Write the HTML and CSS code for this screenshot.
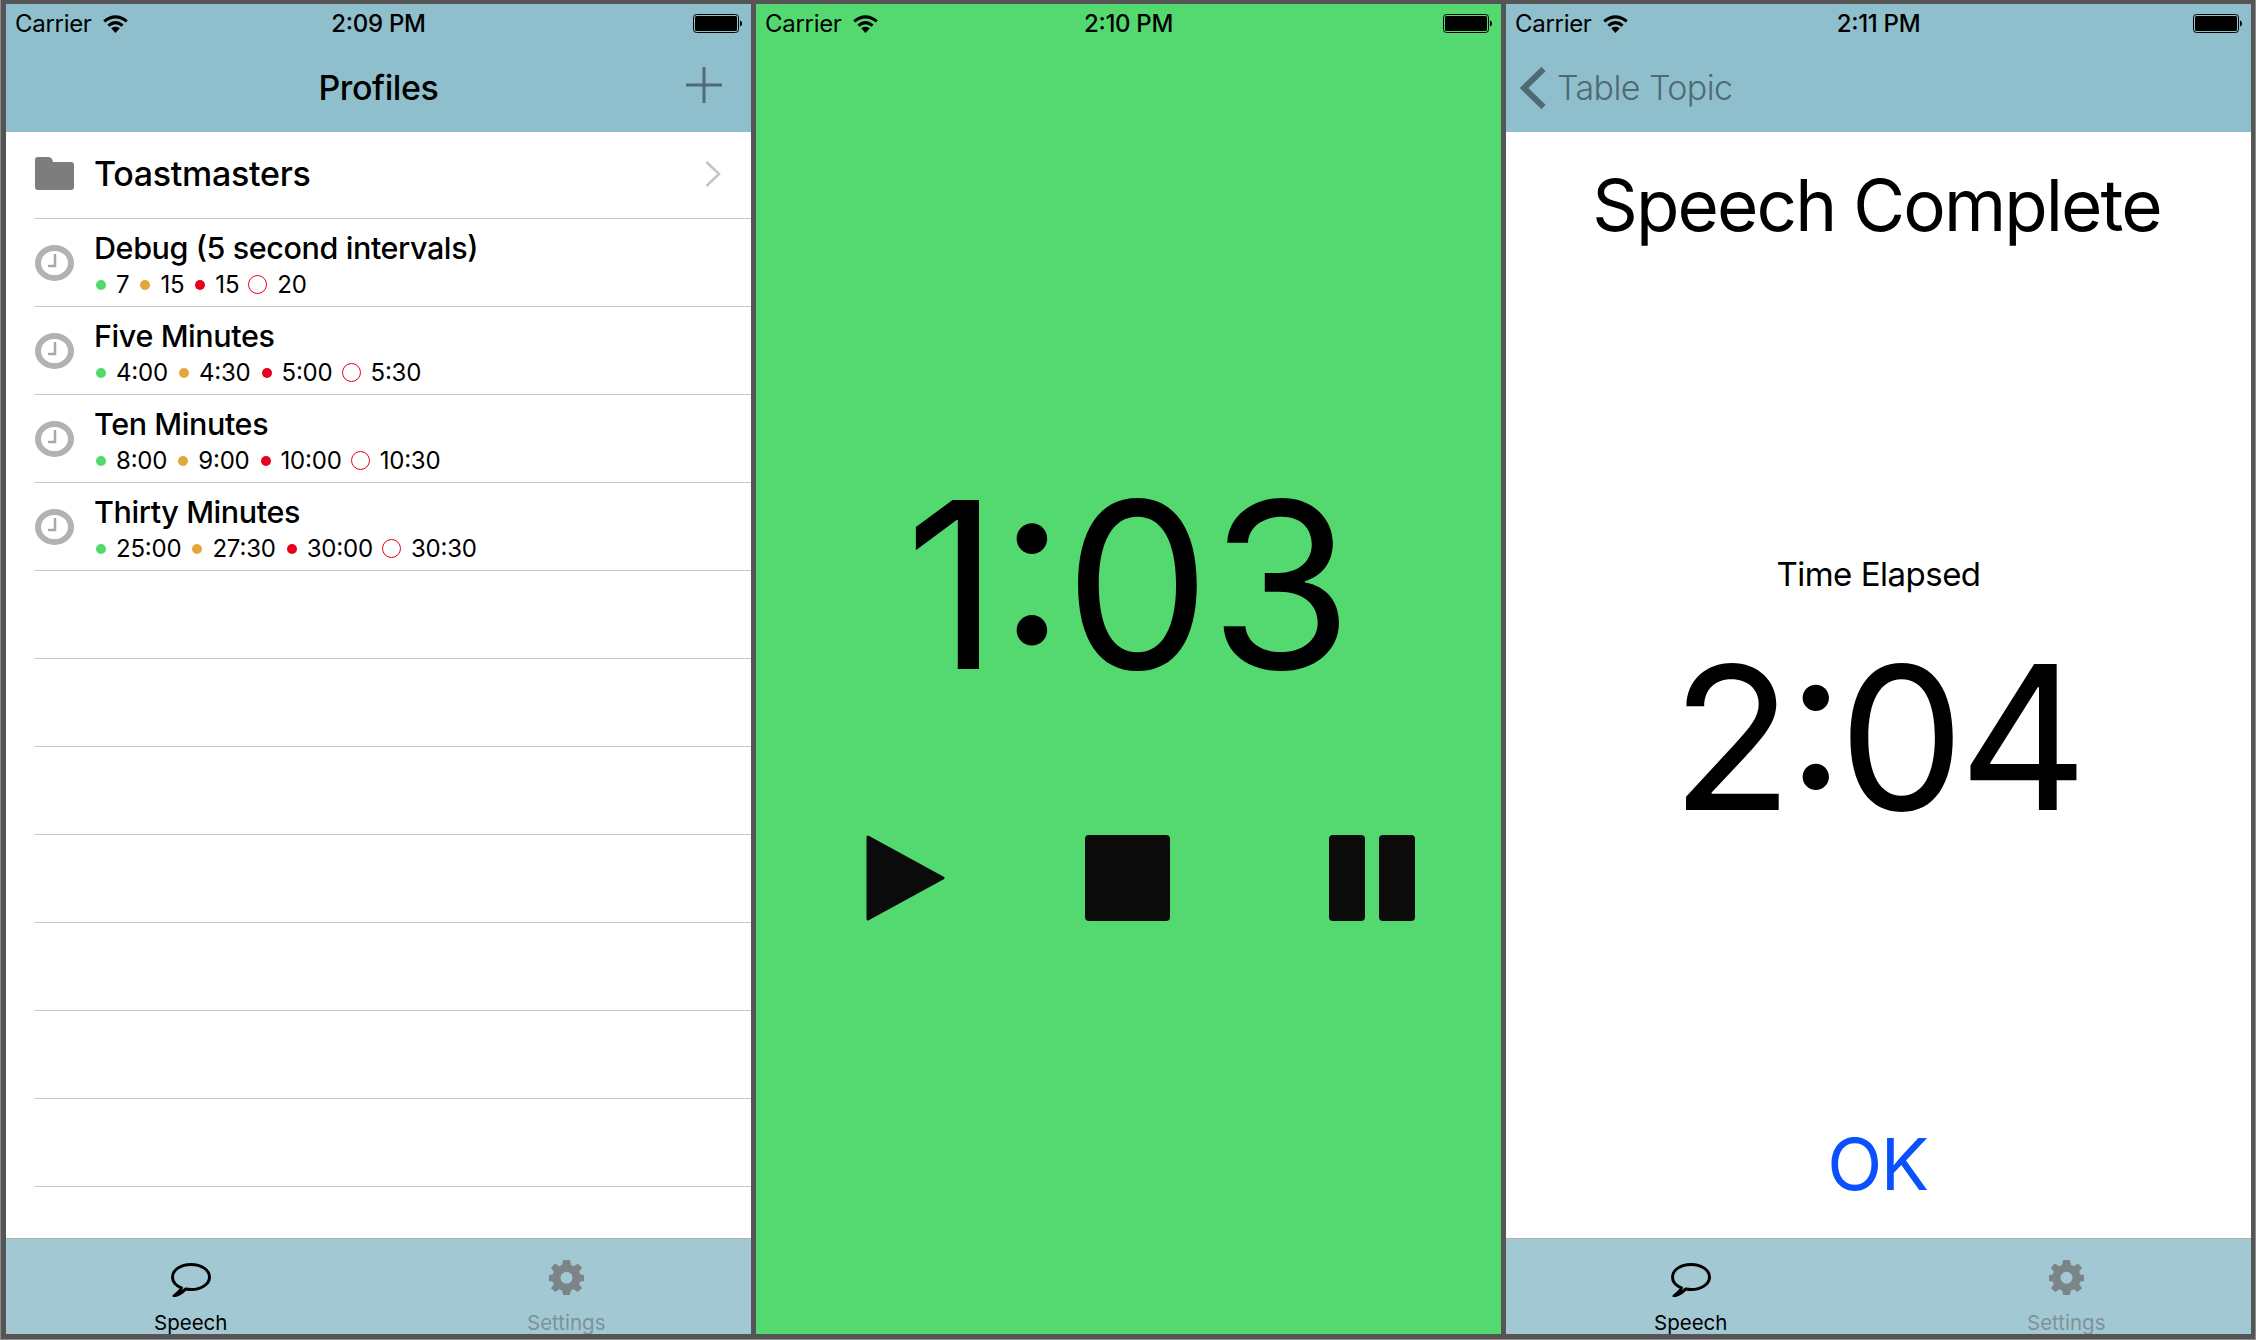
FILE: index.html
```html
<!DOCTYPE html>
<html lang="en">

<head>
    <meta charset="UTF-8" />
    <meta name="viewport" content="width=device-width, initial-scale=1.0" />
    <title>Speech Timer</title>
    <link rel="stylesheet" href="styles.css">
</head>

<body>

    <!-- shared icons -->
    <svg class="sprite" aria-hidden="true">
        <symbol id="wifi" viewBox="0 0 25 18">
            <path d="M1.2 6.4 Q12.5 -2.6 23.8 6.4" fill="none" stroke="currentColor" stroke-width="3" />
            <path d="M5.4 10.7 Q12.5 4.6 19.6 10.7" fill="none" stroke="currentColor" stroke-width="3" />
            <path d="M8.2 13.2 Q12.5 10.4 16.8 13.2 L12.5 18 Z" fill="currentColor" />
        </symbol>
        <symbol id="battery" viewBox="0 0 49 19">
            <rect x="0.5" y="0.5" width="45" height="18" rx="3" fill="none" stroke="currentColor" />
            <rect x="2" y="2" width="42" height="15" rx="1.5" fill="currentColor" />
            <path d="M47 6.5 C48.5 7 49 8 49 9.5 C49 11 48.5 12 47 12.5 Z" fill="currentColor" />
        </symbol>
        <symbol id="clock" viewBox="0 0 39 36">
            <ellipse cx="19.5" cy="18" rx="16.5" ry="15" fill="none" stroke="#b2b2b2" stroke-width="6" />
            <path d="M20 9 V21 H13" fill="none" stroke="#a8a8a8" stroke-width="2.5" />
        </symbol>
        <symbol id="speech" viewBox="0 0 40 34">
            <path d="M10.5 24.8 C4.5 22.5 1.5 18.7 1.5 14 C1.5 7 9.5 1.5 20 1.5 C30.5 1.5 38.5 7 38.5 14 C38.5 21 30.5 26.5 20 26.5 C18 26.5 16.5 26.3 14.5 26 C12 29 8.5 31.5 3 33 C7 30 9.5 28 10.5 24.8 Z" fill="none" stroke="currentColor" stroke-width="3" stroke-linejoin="round" />
        </symbol>
        <symbol id="gear" viewBox="0 0 36 36">
            <path fill-rule="evenodd" fill="currentColor" d="M14.5 0 H21.5 L22.5 5 L25.5 6.3 L29.8 3.5 L34 8 L31 12 L32.2 15 L36 15.5 V21.5 L32.2 22.2 L31 25 L34 29 L29.5 33 L25.5 30.2 L22.5 31.3 L21.5 36 H14.5 L13.5 31.3 L10.5 30.2 L6.5 33 L2 29 L5 25 L3.8 22.2 L0 21.5 V15.5 L3.8 15 L5 12 L2 8 L6.2 3.5 L10.5 6.3 L13.5 5 Z M18 12 A6.2 6.2 0 1 0 18 24.4 A6.2 6.2 0 1 0 18 12 Z" />
        </symbol>
    </svg>

    <div class="frame">

        <!-- profiles list -->
        <section class="screen">
            <header class="top tinted">
                <div class="status">
                    <span class="carrier">Carrier<svg class="wifi"><use href="#wifi" /></svg></span>
                    <span class="clock-time">2:09 PM</span>
                    <svg class="battery"><use href="#battery" /></svg>
                </div>
                <div class="nav">
                    <h1 class="nav-title">Profiles</h1>
                    <svg class="plus" viewBox="0 0 36 36">
                        <path d="M18 0 V36 M0 18 H36" stroke="#4f6a73" stroke-width="3" fill="none" />
                    </svg>
                </div>
            </header>

            <ul class="list">
                <li class="row folder-row">
                    <svg class="row-icon" viewBox="0 0 39 33">
                        <path d="M3 0 H13 Q17 0 18 5 H36 Q39 5 39 8 V30 Q39 33 36 33 H3 Q0 33 0 30 V3 Q0 0 3 0 Z" fill="#7d7d7d" />
                    </svg>
                    <span class="folder-name">Toastmasters</span>
                    <svg class="chevron" viewBox="0 0 16 26">
                        <path d="M1.5 1 L14 13 L1.5 25" fill="none" stroke="#c4c4c4" stroke-width="2.5" />
                    </svg>
                </li>
                <li class="row">
                    <svg class="row-icon clock-icon"><use href="#clock" /></svg>
                    <div class="profile">
                        <div class="profile-name">Debug (5 second intervals)</div>
                        <div class="times">
                            <i class="dot green"></i><span>7</span>
                            <i class="dot orange"></i><span>15</span>
                            <i class="dot red"></i><span>15</span>
                            <i class="ring"></i><span>20</span>
                        </div>
                    </div>
                </li>
                <li class="row">
                    <svg class="row-icon clock-icon"><use href="#clock" /></svg>
                    <div class="profile">
                        <div class="profile-name">Five Minutes</div>
                        <div class="times">
                            <i class="dot green"></i><span>4:00</span>
                            <i class="dot orange"></i><span>4:30</span>
                            <i class="dot red"></i><span>5:00</span>
                            <i class="ring"></i><span>5:30</span>
                        </div>
                    </div>
                </li>
                <li class="row">
                    <svg class="row-icon clock-icon"><use href="#clock" /></svg>
                    <div class="profile">
                        <div class="profile-name">Ten Minutes</div>
                        <div class="times">
                            <i class="dot green"></i><span>8:00</span>
                            <i class="dot orange"></i><span>9:00</span>
                            <i class="dot red"></i><span>10:00</span>
                            <i class="ring"></i><span>10:30</span>
                        </div>
                    </div>
                </li>
                <li class="row">
                    <svg class="row-icon clock-icon"><use href="#clock" /></svg>
                    <div class="profile">
                        <div class="profile-name">Thirty Minutes</div>
                        <div class="times">
                            <i class="dot green"></i><span>25:00</span>
                            <i class="dot orange"></i><span>27:30</span>
                            <i class="dot red"></i><span>30:00</span>
                            <i class="ring"></i><span>30:30</span>
                        </div>
                    </div>
                </li>
                <li class="row"></li>
                <li class="row"></li>
                <li class="row"></li>
                <li class="row"></li>
                <li class="row"></li>
                <li class="row"></li>
                <li class="row"></li>
            </ul>

            <nav class="tabs">
                <div class="tab active">
                    <svg class="tab-speech"><use href="#speech" /></svg>
                    <span>Speech</span>
                </div>
                <div class="tab">
                    <svg class="tab-gear"><use href="#gear" /></svg>
                    <span>Settings</span>
                </div>
            </nav>
        </section>

        <!-- running timer -->
        <section class="screen timer-screen">
            <header class="top">
                <div class="status">
                    <span class="carrier">Carrier<svg class="wifi"><use href="#wifi" /></svg></span>
                    <span class="clock-time">2:10 PM</span>
                    <svg class="battery"><use href="#battery" /></svg>
                </div>
            </header>
            <div class="timer">1:03</div>
            <div class="controls">
                <svg class="play" viewBox="0 0 79 86">
                    <path d="M2 2 L77 43 L2 84 Z" fill="#0b0b0b" stroke="#0b0b0b" stroke-width="3" stroke-linejoin="round" />
                </svg>
                <div class="stop"></div>
                <div class="pause"><i></i><i></i></div>
            </div>
        </section>

        <!-- finished -->
        <section class="screen">
            <header class="top tinted">
                <div class="status">
                    <span class="carrier">Carrier<svg class="wifi"><use href="#wifi" /></svg></span>
                    <span class="clock-time">2:11 PM</span>
                    <svg class="battery"><use href="#battery" /></svg>
                </div>
                <div class="nav back-nav">
                    <svg class="back-arrow" viewBox="0 0 26 42">
                        <path d="M23.5 2 L4 21 L23.5 40" fill="none" stroke="#4f6a73" stroke-width="6" />
                    </svg>
                    <span class="back-label">Table Topic</span>
                </div>
            </header>

            <main class="complete">
                <h2 class="complete-title">Speech Complete</h2>
                <div class="elapsed-label">Time Elapsed</div>
                <div class="elapsed">2:04</div>
                <div class="ok">OK</div>
            </main>

            <nav class="tabs">
                <div class="tab active">
                    <svg class="tab-speech"><use href="#speech" /></svg>
                    <span>Speech</span>
                </div>
                <div class="tab">
                    <svg class="tab-gear"><use href="#gear" /></svg>
                    <span>Settings</span>
                </div>
            </nav>
        </section>

    </div>

</body>

</html>
```

FILE: styles.css
```css
html {
    background-color: #8c8c8c;
}

body {
    margin: 0;
    padding: 0 1px 1px 1px;
    font-family: Inter, "Liberation Sans", sans-serif;
    font-feature-settings: "case";
    color: #000;
}

.sprite {
    display: block;
    width: 0;
    height: 0;
    overflow: hidden;
}

.frame {
    display: grid;
    grid-template-columns: repeat(3, 745px);
    gap: 5px;
    height: 1339px;
    box-sizing: border-box;
    padding: 4px 5px 5px 5px;
    background-color: #555;
}

.screen {
    display: flex;
    flex-direction: column;
    background-color: #fff;
    overflow: hidden;
}

.top {
    flex: none;
}

.tinted {
    background-color: #8fbfcc;
}

/* status bar */
.status {
    display: flex;
    align-items: center;
    justify-content: space-between;
    height: 39px;
    padding: 0 9px 0 9px;
    font-size: 24px;
    letter-spacing: -0.3px;
}

.carrier {
    display: flex;
    align-items: center;
    width: 200px;
}

.wifi {
    width: 25px;
    height: 18px;
    margin-left: 11px;
}

.clock-time {
    font-weight: 500;
}

.battery {
    width: 49px;
    height: 19px;
    margin-left: 151px;
}

/* nav bar */
.nav {
    position: relative;
    display: flex;
    align-items: center;
    justify-content: center;
    height: 89px;
}

.nav-title {
    margin: 0;
    font-size: 34px;
    font-weight: 500;
    letter-spacing: -0.4px;
}

.plus {
    position: absolute;
    top: 24px;
    right: 29px;
    width: 36px;
    height: 36px;
}

.back-nav {
    justify-content: flex-start;
    padding-left: 14px;
}

.back-arrow {
    width: 26px;
    height: 42px;
}

.back-label {
    margin-left: 11px;
    font-size: 34px;
    font-weight: 300;
    letter-spacing: -0.6px;
    color: #4f6a73;
}

/* list */
.list {
    flex: 1;
    margin: 0;
    padding: 0 0 0 29px;
    list-style: none;
}

.row {
    display: flex;
    align-items: center;
    box-sizing: border-box;
    height: 88px;
    border-bottom: 1.5px solid #c8c8c8;
}

.folder-row {
    height: 87px;
    padding-bottom: 3px;
}

.row-icon {
    flex: none;
    width: 39px;
    height: 33px;
}

.clock-icon {
    height: 36px;
}

.folder-name {
    flex: 1;
    margin-left: 20px;
    font-size: 34px;
    font-weight: 500;
    letter-spacing: -0.3px;
}

.chevron {
    width: 16px;
    height: 26px;
    margin-right: 30px;
}

.profile {
    margin-top: 5px;
    margin-left: 20px;
}

.profile-name {
    font-size: 30.5px;
    font-weight: 500;
    line-height: 39px;
    letter-spacing: -0.4px;
}

.times {
    display: flex;
    align-items: center;
    height: 36px;
    font-size: 24px;
    letter-spacing: -0.2px;
}

.times span {
    margin-right: 9px;
}

.dot {
    width: 10px;
    height: 10px;
    margin: 0 10px 0 2px;
    border-radius: 50%;
}

.green {
    background-color: #53d86a;
}

.orange {
    background-color: #e0a83a;
}

.red {
    background-color: #e8001c;
}

.ring {
    box-sizing: border-box;
    width: 19px;
    height: 19px;
    margin-right: 10px;
    border: 1.5px solid #e8001c;
    border-radius: 50%;
}

/* tab bar */
.tabs {
    flex: none;
    display: grid;
    grid-template-columns: 1fr 1fr;
    column-gap: 6px;
    height: 96px;
    box-sizing: border-box;
    border-top: 1.5px solid #b0b0b0;
    background-color: #a2c9d3;
}

.tab {
    display: flex;
    flex-direction: column;
    align-items: center;
    font-size: 20.5px;
    color: #7f9299;
}

.tab svg {
    color: #7b8487;
}

.tab span {
    padding-top: 1px;
    line-height: 24px;
}

.tab.active,
.tab.active svg {
    color: #000;
}

.tab-speech {
    width: 40px;
    height: 34px;
    margin: 24px 0 13px;
}

.tab-gear {
    width: 35px;
    height: 35px;
    margin: 21px 0 15px;
}

/* timer */
.timer-screen {
    background-color: #54d970;
}

.timer {
    margin-top: 412px;
    font-size: 232px;
    line-height: 260px;
    letter-spacing: -1px;
    text-align: center;
}

.controls {
    display: flex;
    align-items: flex-start;
    margin-top: 120px;
    padding-left: 110px;
}

.play {
    width: 79px;
    height: 86px;
}

.stop {
    width: 85px;
    height: 86px;
    margin-left: 140px;
    border-radius: 4px;
    background-color: #0b0b0b;
}

.pause {
    display: flex;
    gap: 14px;
    margin-left: 159px;
}

.pause i {
    display: block;
    width: 36px;
    height: 86px;
    border-radius: 4px;
    background-color: #0b0b0b;
}

/* speech complete */
.complete {
    flex: 1;
    display: flex;
    flex-direction: column;
    align-items: center;
}

.complete-title {
    margin: 31px 0 0;
    padding-right: 4px;
    font-size: 71px;
    font-weight: 400;
    line-height: 84px;
    letter-spacing: -1.9px;
}

.elapsed-label {
    margin-top: 307px;
    font-size: 33px;
    line-height: 40px;
    letter-spacing: -0.5px;
}

.elapsed {
    margin-top: 43px;
    padding-right: 4px;
    font-size: 200px;
    line-height: 200px;
    letter-spacing: -6px;
}

.ok {
    margin-top: auto;
    margin-bottom: 30px;
    padding-right: 2px;
    font-size: 72px;
    line-height: 88px;
    letter-spacing: -1.4px;
    color: #0a50ff;
}
```
